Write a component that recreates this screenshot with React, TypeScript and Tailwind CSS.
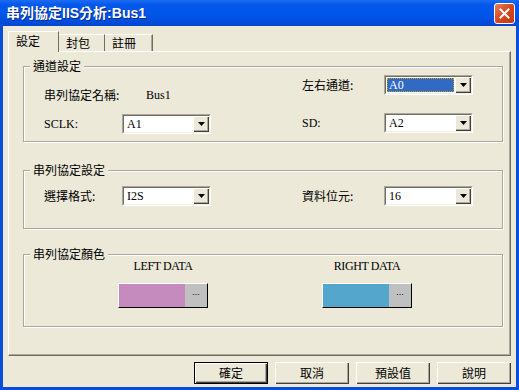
import React from 'react';

const cjk = "font-['Noto_Sans_CJK_TC','Noto_Sans_CJK_SC',sans-serif]";
const serif = "font-['Liberation_Serif','Noto_Sans_CJK_TC',serif]";

function Arrow() {
  return (
    <svg width="7" height="4" viewBox="0 0 7 4">
      <path d="M0 0h7L3.5 4z" fill="#000" />
    </svg>
  );
}

function Combo({ value, selected }: { value: string; selected?: boolean }) {
  return (
    <div className="flex h-[20px] w-[89px] border border-t-[#ACA899] border-l-[#ACA899] border-b-white border-r-white">
      <div className="flex flex-1 border border-t-[#716F64] border-l-[#716F64] border-b-[#F1EFE2] border-r-[#F1EFE2] bg-white">
        <div className="flex flex-1 p-px">
          {selected ? (
            <div className="flex flex-1 items-center border border-dotted border-[#C8A000] bg-[#316AC5] pl-px">
              <span className={`${serif} text-[12px] leading-none text-white`}>{value}</span>
            </div>
          ) : (
            <div className="flex flex-1 items-center pl-[2px]">
              <span className={`${serif} text-[12px] leading-none text-black`}>{value}</span>
            </div>
          )}
        </div>
        <div className="flex w-[16px] items-center justify-center bg-[#ECE9D8] shadow-[inset_1px_1px_0_#fff,inset_-1px_-1px_0_#404040,inset_-2px_-2px_0_#ACA899]">
          <Arrow />
        </div>
      </div>
    </div>
  );
}

function Group({ title, className, children }: { title: string; className: string; children: React.ReactNode }) {
  return (
    <div className={`relative ml-[14px] w-[480px] border border-[#ACA899] shadow-[inset_1px_1px_0_#fff,1px_1px_0_#fff] ${className}`}>
      <span className={`${cjk} absolute left-[6px] top-[-10px] bg-[#ECE9D8] px-[3px] text-[12px] leading-[18px] text-black`}>
        {title}
      </span>
      {children}
    </div>
  );
}

function Field({ label, labelWidth, value, selected, latin }: { label: string; labelWidth: string; value: string; selected?: boolean; latin?: boolean }) {
  return (
    <div className="flex h-[20px] items-center">
      <span className={`${latin ? serif : cjk} ${labelWidth} text-[12px] leading-none text-black`}>{label}</span>
      <Combo value={value} selected={selected} />
    </div>
  );
}

function ColorPick({ label, color }: { label: string; color: string }) {
  return (
    <div className="flex w-[90px] flex-col items-center">
      <span className={`${serif} whitespace-nowrap text-[12px] leading-[16px] tracking-[-0.4px] text-black`}>{label}</span>
      <div className="mt-[9px] flex h-[25px] w-[90px] border border-t-white border-l-white border-b-black border-r-black">
        <div className="flex-1" style={{ backgroundColor: color }} />
        <div className="flex w-[22px] justify-center bg-[#C0C0C0] pt-[4px]">
          <span className="font-['Liberation_Sans',sans-serif] text-[9px] leading-none text-black">...</span>
        </div>
      </div>
    </div>
  );
}

function Btn({ label, isDefault }: { label: string; isDefault?: boolean }) {
  return (
    <button
      className={`${cjk} flex h-[22px] w-[74px] items-center justify-center bg-[#ECE9D8] text-[12px] leading-none text-black ${
        isDefault
          ? 'border border-black shadow-[inset_1px_1px_0_#fff,inset_-1px_-1px_0_#404040,inset_-2px_-2px_0_#ACA899]'
          : 'shadow-[inset_1px_1px_0_#fff,inset_-1px_-1px_0_#404040,inset_-2px_-2px_0_#ACA899]'
      }`}
    >
      {label}
    </button>
  );
}

export default function App() {
  return (
    <div className="flex h-[390px] w-[519px] flex-col overflow-hidden bg-[#0A4CDB]">
      {/* Title bar */}
      <div className="flex h-[26px] items-center bg-[linear-gradient(180deg,#1C6DF2_0%,#0458EB_18%,#0054E8_60%,#0047D3_100%)] pl-[6px] pr-[4px]">
        <span className={`font-['Liberation_Sans','Noto_Sans_CJK_TC',sans-serif] text-[14px] font-bold leading-none text-white [text-shadow:1px_1px_0_#0A2A8C]`}>
          串列協定IIS分析:Bus1
        </span>
        <div className="ml-auto flex h-[21px] w-[21px] items-center justify-center rounded-[3px] border border-white bg-[linear-gradient(135deg,#E9805E_0%,#D9461E_50%,#C23A12_100%)]">
          <svg width="11" height="11" viewBox="0 0 11 11">
            <path d="M1.5 1.5l8 8M9.5 1.5l-8 8" stroke="#fff" strokeWidth="2" strokeLinecap="square" />
          </svg>
        </div>
      </div>

      {/* Body */}
      <div className="mx-[3px] mb-[3px] flex flex-1 flex-col bg-[#ECE9D8] px-[5px] pt-[5px]">
        {/* Tabs */}
        <div className="flex h-[20px] items-end">
          <div className={`${cjk} relative z-10 -mb-px flex h-[21px] w-[51px] items-start border-l border-t border-r border-l-white border-t-white border-r-[#716F64] bg-[#ECE9D8] pl-[7px] pt-[2px] text-[12px] leading-[14px] text-black`}>
            設定
          </div>
          <div className={`${cjk} flex h-[17px] w-[46px] items-start border-t border-r border-t-white border-r-[#716F64] pl-[7px] pt-[1px] text-[12px] leading-[14px] text-black`}>
            封包
          </div>
          <div className={`${cjk} flex h-[17px] w-[48px] items-start border-t border-r border-t-white border-r-[#716F64] pl-[7px] pt-[1px] text-[12px] leading-[14px] text-black shadow-[inset_-1px_0_0_#ACA899]`}>
            註冊
          </div>
        </div>

        {/* Panel */}
        <div className="flex h-[305px] flex-col border border-t-white border-l-white border-b-[#716F64] border-r-[#716F64] shadow-[inset_-1px_-1px_0_#ACA899]">
          <Group title="通道設定" className="mt-[14px] h-[76px]">
            <div className="flex pl-[20px]">
              <div className="flex w-[258px] flex-col gap-[9px] pt-[18px]">
                <div className="flex h-[20px] items-center">
                  <span className={`${cjk} w-[102px] text-[12px] leading-none text-black`}>串列協定名稱:</span>
                  <span className={`${serif} text-[12px] leading-none text-black`}>Bus1</span>
                </div>
                <Field label="SCLK:" labelWidth="w-[78px]" value="A1" latin />
              </div>
              <div className="flex flex-col gap-[18px] pt-[8px]">
                <Field label="左右通道:" labelWidth="w-[82px]" value="A0" selected />
                <Field label="SD:" labelWidth="w-[82px]" value="A2" latin />
              </div>
            </div>
          </Group>

          <Group title="串列協定設定" className="mt-[28px] h-[59px]">
            <div className="flex pl-[20px] pt-[15px]">
              <div className="w-[258px]">
                <Field label="選擇格式:" labelWidth="w-[78px]" value="I2S" />
              </div>
              <Field label="資料位元:" labelWidth="w-[82px]" value="16" />
            </div>
          </Group>

          <Group title="串列協定顏色" className="mt-[25px] h-[73px]">
            <div className="flex gap-[114px] pl-[94px] pt-[3px]">
              <ColorPick label="LEFT DATA" color="#C68BBE" />
              <ColorPick label="RIGHT DATA" color="#55A6CC" />
            </div>
          </Group>
        </div>

        {/* Buttons */}
        <div className="mt-[6px] flex justify-end gap-[7px]">
          <Btn label="確定" isDefault />
          <Btn label="取消" />
          <Btn label="預設值" />
          <Btn label="說明" />
        </div>
      </div>
    </div>
  );
}
